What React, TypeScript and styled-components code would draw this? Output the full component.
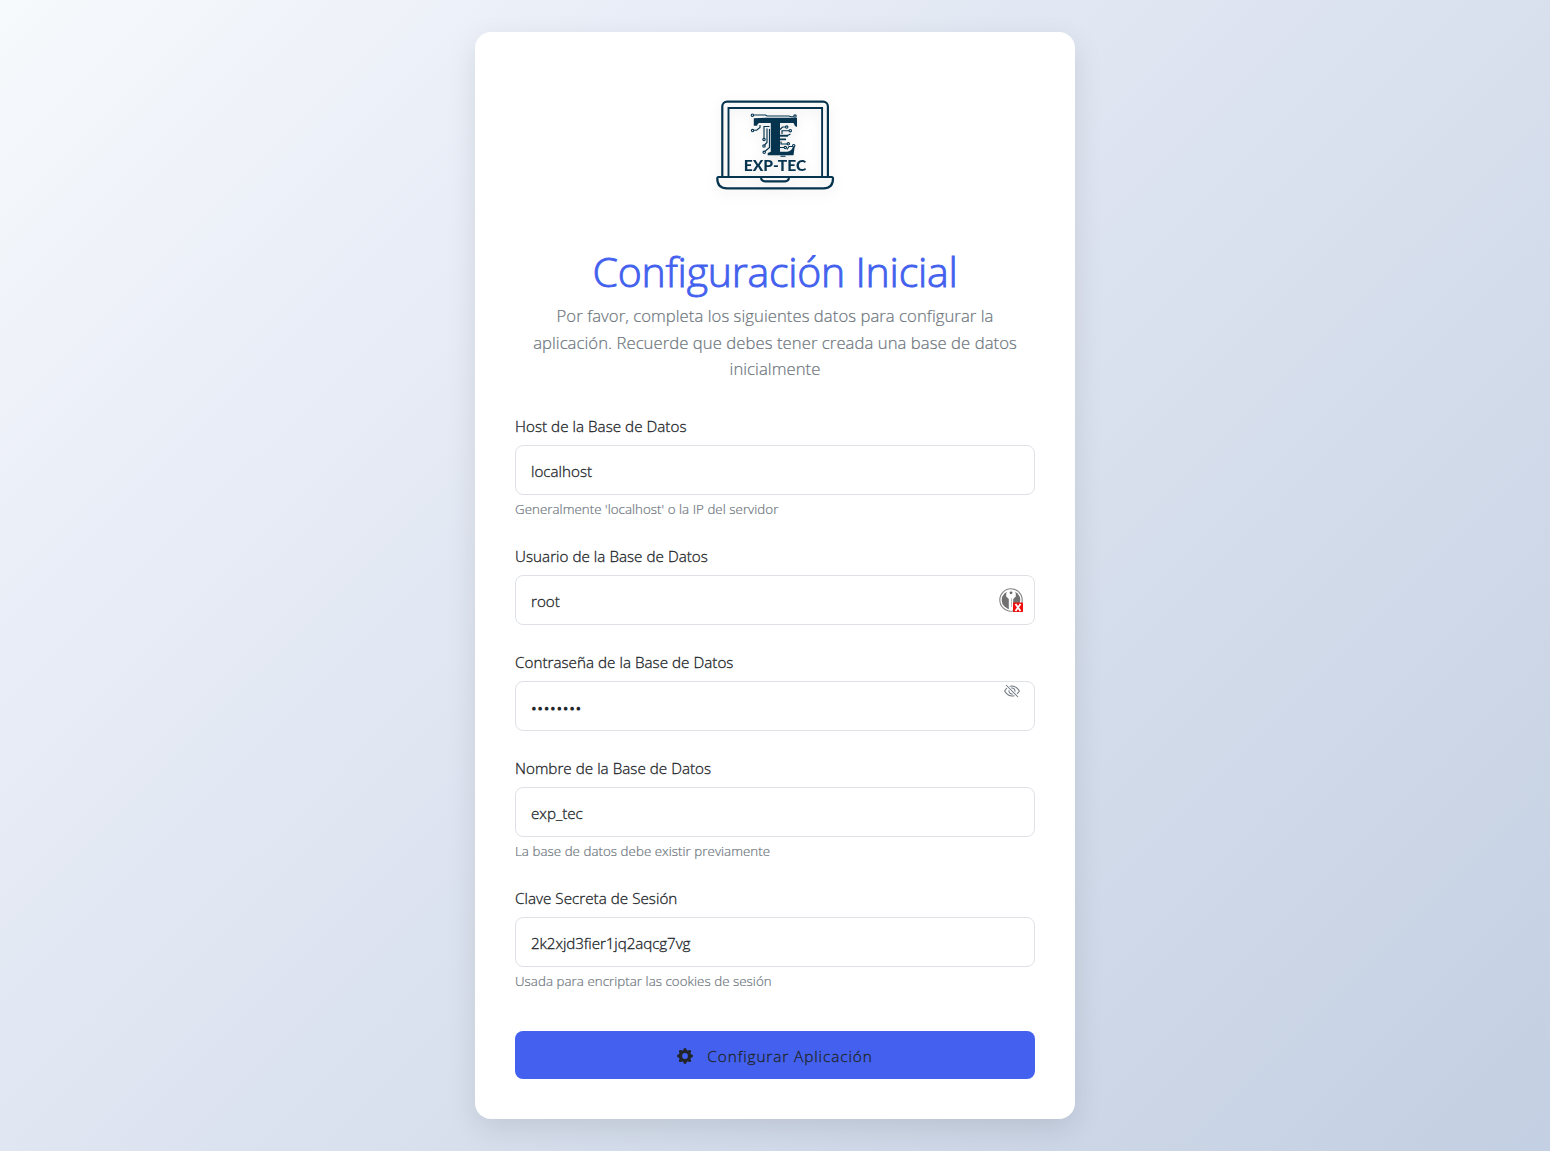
import styled, { createGlobalStyle } from 'styled-components';

const GlobalStyle = createGlobalStyle`
  *, *::before, *::after { box-sizing: border-box; }
  body {
    margin: 0;
    font-family: "Open Sans", "Noto Sans", sans-serif;
    font-weight: 300;
    color: #212529;
  }
`;

const Page = styled.main`
  min-height: 1151px;
  display: flex;
  justify-content: center;
  align-items: flex-start;
  padding: 32px 0;
  background: linear-gradient(135deg, #f7fafc 0%, #ebeff8 20%, #c3cfe2 100%);
`;

const Card = styled.section`
  width: 600px;
  height: 1087px;
  padding: 40px;
  display: flex;
  flex-direction: column;
  background: #fff;
  border-radius: 16px;
  box-shadow: 0 10px 30px rgba(0, 0, 0, 0.1);
`;

const Header = styled.header`
  display: flex;
  flex-direction: column;
  align-items: center;
  height: 342px;
  text-align: center;
`;

const Logo = styled.svg`
  width: 120px;
  height: 146px;
  margin-bottom: 28px;
  filter: drop-shadow(0 4px 6px rgba(0, 0, 0, 0.1));
`;

const Title = styled.h1`
  margin: 0 0 6.4px;
  font-size: 41px;
  line-height: 51px;
  font-weight: 300;
  letter-spacing: -0.22px;
  -webkit-text-stroke: 0.9px #4361ee;
  color: #4361ee;
`;

const Intro = styled.p`
  margin: 0;
  width: 500px;
  font-size: 16.7px;
  line-height: 26.4px;
  letter-spacing: 0.05px;
  -webkit-text-stroke: 0.2px #6c757d;
  color: #6c757d;
`;

const Form = styled.form`
  display: flex;
  flex-direction: column;
`;

const Field = styled.div`
  display: flex;
  flex-direction: column;
  margin-bottom: 24px;
`;

const Label = styled.label`
  margin-bottom: 7px;
  font-size: 15.2px;
  line-height: 24px;
  letter-spacing: 0.03px;
  -webkit-text-stroke: 0.3px #212529;

  ${Field} + ${Field} & {
    padding-top: 1px;
  }
`;

const InputWrap = styled.div`
  position: relative;
  display: flex;
`;

const Input = styled.input<{ $tracking?: number }>`
  width: 100%;
  height: 50px;
  padding: 1px 15px 0;
  border: 1px solid #dee2e6;
  border-radius: 8px;
  background: #fff;
  font: 300 15.2px "Open Sans", "Noto Sans", sans-serif;
  letter-spacing: ${p => p.$tracking ?? 0}px;
  -webkit-text-stroke: 0.3px #212529;
  color: #212529;
  outline: none;

  &[type='password'] {
    padding-top: 3px;
    letter-spacing: 0.65px;
    -webkit-text-stroke-width: 1.2px;
  }
`;

const Help = styled.small`
  margin-top: 4px;
  font-size: 13.3px;
  line-height: 20px;
  letter-spacing: 0.05px;
  -webkit-text-stroke: 0.2px #6c757d;
  color: #6c757d;
`;

const Badge = styled.svg<{ $right: number; $top: number }>`
  position: absolute;
  right: ${p => p.$right}px;
  top: ${p => p.$top}px;
`;

const Submit = styled.button`
  display: flex;
  align-items: center;
  justify-content: center;
  gap: 14px;
  height: 48px;
  margin-top: 16px;
  padding: 2px 0 0;
  border: 0;
  border-radius: 8px;
  background: #4361ee;
  color: #212529;
  font: 300 15.4px "Open Sans", "Noto Sans", sans-serif;
  letter-spacing: 0.89px;
  -webkit-text-stroke: 0.3px #212529;
`;

const INK = '#06344f';

const LaptopLogo = () => (
  <Logo viewBox="715 72 120 146" fill="none" stroke={INK} strokeWidth="2.2">
    <path d="M722.3 176V106.500a4.800 4.800 0 0 1 4.800-4.800h96a4.800 4.800 0 0 1 4.800 4.800V176" />
    <path d="M728.500 176V108h93.600v68" strokeWidth="1.900" />
    <path d="M718.500 177h113.200q1.300 0 1.300 1.500c0 6-3 9.800-9.500 9.800H727c-6.500 0-9.700-3.800-9.700-9.800q0-1.500 1.200-1.500Z" />
    <path d="M761 177.500q.3 3.800 4 3.800h20q3.700 0 4-3.800" />
    <g fill={INK} stroke="none">
      <path d="M753.800 118.300q8-.8 16.500-.5h26.700v9.200q-2.800-1-3.500-4H780v28.700h7q4.500-.5 6-5h1.700l-1.200 8.500h-25.800v-2.200l3.100-1.300V123h-11.500q-1.500 0-2.300 2.800h-3.200Z" />
      <rect x="776" y="134.800" width="12" height="1.900" />
      <rect x="776" y="138.500" width="10" height="1.700" />
      <rect x="780.500" y="155.700" width="5" height="1.100" />
    </g>
    <g strokeWidth="1.150">
      <path d="M753.500 115h12l1.500 1h22l2 .7h3" />
      <path d="M753.600 130.200h3l3.400-2.700v-2.500" />
      <path d="M764 138.500v-12h5.500" />
      <path d="M767 128.500v14l-2.500 2.500" />
      <path d="M769.500 129v18.500l-4.700 4" />
      <path d="M780 129.500l2.500-2.500h3M782 134v-3.300h7M787.500 135.500l3-1.500M781 141.500v2.500h6M780 147.500h4M787 149.500l2-3h3.500" />
      <circle cx="752.400" cy="115.200" r="1.200" fill="#fff" />
      <circle cx="795" cy="116" r="1.200" fill="#fff" />
      <circle cx="752.600" cy="130.500" r="1.200" fill="#fff" />
      <circle cx="764" cy="139.500" r="1.200" fill="#fff" />
      <circle cx="764" cy="146" r="1.200" fill="#fff" />
      <circle cx="764.200" cy="152.300" r="1.200" fill="#fff" />
      <circle cx="786.700" cy="127" r="1.200" fill="#fff" />
      <circle cx="790.300" cy="130.700" r="1.200" fill="#fff" />
      <circle cx="788.300" cy="143.800" r="1.200" fill="#fff" />
      <circle cx="785.300" cy="147.500" r="1.200" fill="#fff" />
      <circle cx="793.700" cy="145.700" r="1.200" fill="#fff" />
    </g>
    <text x="743.700" y="170.700" textLength="62.500" lengthAdjust="spacingAndGlyphs" fill={INK} stroke="none" fontFamily="Lato, sans-serif" fontSize="14.400" fontWeight="900">EXP-TEC</text>
  </Logo>
);

const KeyBadge = () => (
  <Badge $right={11} $top={13} width="25" height="25" viewBox="0 0 25 25">
    <circle cx="12" cy="12" r="11.200" fill="#fff" stroke="#858585" strokeWidth="1.100" />
    <circle cx="12" cy="12" r="9.300" fill="#707070" />
    <path d="M8.500 2.500h7l1.300 3v3l-2.600 2.500v10l-2.200 2-2.200-2V11L7.200 8.500v-3Z" fill="#fff" />
    <circle cx="12" cy="4.800" r="1.400" fill="#666" />
    <path d="M12.500 10.500v8.500" stroke="#aaa" strokeWidth=".8" />
    <rect x="14" y="14.500" width="10" height="9.500" fill="#f00f0f" />
    <path d="m16.500 16 5 7m0-7-5 7" stroke="#fff" strokeWidth="1.800" />
  </Badge>
);

const EyeSlash = () => (
  <Badge $right={15} $top={2} width="16" height="16" viewBox="0 0 16 16" fill="#6c757d">
    <path d="M13.359 11.238C15.060 9.720 16 8 16 8s-3-5.500-8-5.500a7.028 7.028 0 0 0-2.790.588l.770.771A5.944 5.944 0 0 1 8 3.500c2.120 0 3.879 1.168 5.168 2.457A13.134 13.134 0 0 1 14.828 8c-.058.087-.122.183-.195.288-.335.480-.830 1.120-1.465 1.755-.165.165-.337.328-.517.486l.708.709z" />
    <path d="M11.297 9.176a3.500 3.500 0 0 0-4.474-4.474l.823.823a2.500 2.500 0 0 1 2.829 2.829l.822.822zm-2.943 1.299.822.822a3.500 3.500 0 0 1-4.474-4.474l.823.823a2.500 2.500 0 0 0 2.829 2.829z" />
    <path d="M3.350 5.470c-.180.160-.353.322-.518.487A13.134 13.134 0 0 0 1.172 8l.195.288c.335.480.830 1.120 1.465 1.755C4.121 11.332 5.881 12.500 8 12.500c.716 0 1.390-.133 2.020-.360l.770.772A7.029 7.029 0 0 1 8 13.500C3 13.500 0 8 0 8s.939-1.721 2.641-3.238l.708.709zm10.296 8.884-12-12 .708-.708 12 12-.708.708z" />
  </Badge>
);

const Gear = () => (
  <svg width="16" height="16" viewBox="0 0 16 16" fill="#212529">
    <path d="M9.405 1.050c-.413-1.400-2.397-1.400-2.810 0l-.100.340a1.464 1.464 0 0 1-2.105.872l-.310-.170c-1.283-.698-2.686.705-1.987 1.987l.169.311c.446.820.023 1.841-.872 2.105l-.340.100c-1.400.413-1.400 2.397 0 2.810l.340.100a1.464 1.464 0 0 1 .872 2.105l-.170.310c-.698 1.283.705 2.686 1.987 1.987l.311-.169a1.464 1.464 0 0 1 2.105.872l.100.340c.413 1.400 2.397 1.400 2.810 0l.100-.340a1.464 1.464 0 0 1 2.105-.872l.310.170c1.283.698 2.686-.705 1.987-1.987l-.169-.311a1.464 1.464 0 0 1 .872-2.105l.340-.100c1.400-.413 1.400-2.397 0-2.810l-.340-.100a1.464 1.464 0 0 1-.872-2.105l.170-.310c.698-1.283-.705-2.686-1.987-1.987l-.311.169a1.464 1.464 0 0 1-2.105-.872l-.100-.340zM8 10.930a2.929 2.929 0 1 1 0-5.860 2.929 2.929 0 0 1 0 5.858z" />
  </svg>
);

export default function App() {
  return (
    <>
      <GlobalStyle />
      <Page>
        <Card>
          <Header>
            <LaptopLogo />
            <Title>Configuración Inicial</Title>
            <Intro>
              Por favor, completa los siguientes datos para configurar la aplicación. Recuerde que debes tener creada una base de datos inicialmente
            </Intro>
          </Header>
          <Form>
            <Field>
              <Label htmlFor="host">Host de la Base de Datos</Label>
              <Input id="host" defaultValue="localhost" />
              <Help>Generalmente 'localhost' o la IP del servidor</Help>
            </Field>
            <Field>
              <Label htmlFor="user">Usuario de la Base de Datos</Label>
              <InputWrap>
                <Input id="user" defaultValue="root" />
                <KeyBadge />
              </InputWrap>
            </Field>
            <Field>
              <Label htmlFor="password">Contraseña de la Base de Datos</Label>
              <InputWrap>
                <Input id="password" type="password" defaultValue="password" />
                <EyeSlash />
              </InputWrap>
            </Field>
            <Field>
              <Label htmlFor="name">Nombre de la Base de Datos</Label>
              <Input id="name" defaultValue="exp_tec" />
              <Help>La base de datos debe existir previamente</Help>
            </Field>
            <Field>
              <Label htmlFor="secret">Clave Secreta de Sesión</Label>
              <Input id="secret" $tracking={-0.08} defaultValue="2k2xjd3fier1jq2aqcg7vg" />
              <Help>Usada para encriptar las cookies de sesión</Help>
            </Field>
            <Submit type="button">
              <Gear />
              Configurar Aplicación
            </Submit>
          </Form>
        </Card>
      </Page>
    </>
  );
}
